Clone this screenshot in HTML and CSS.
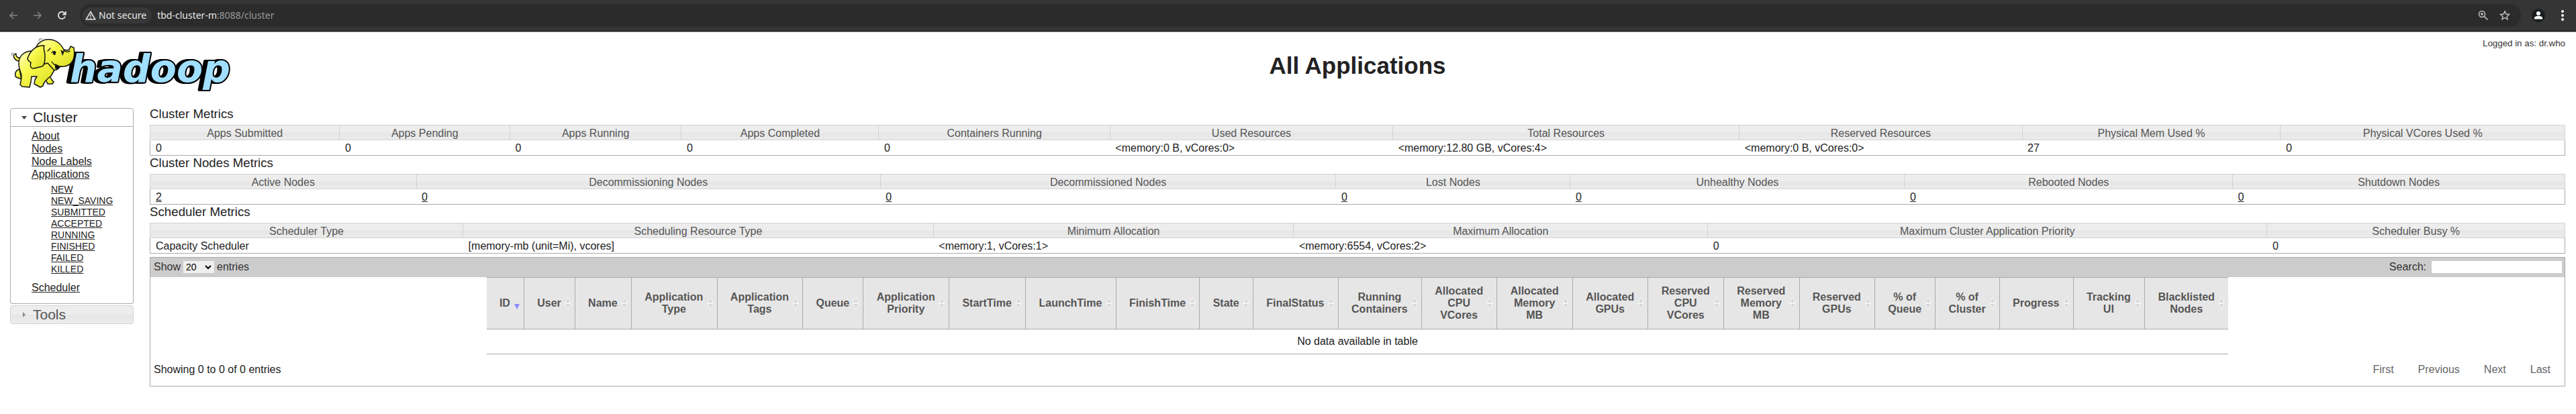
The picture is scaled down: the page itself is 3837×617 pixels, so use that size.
FILE: index.html
```html
<!DOCTYPE html>
<html lang="en">
<head>
<meta charset="utf-8">
<title>All Applications</title>
<link rel="stylesheet" href="styles.css">
</head>
<body>
<svg class="defs" aria-hidden="true">
  <symbol id="sort" viewBox="0 0 10 20">
    <path d="M5 1 9 9.500H1z M5 19 9 10.500H1z" fill="#d9d9d9" stroke="#f6f6f6" stroke-width="1"/>
  </symbol>
  <symbol id="sort-desc" viewBox="0 0 10 20">
    <path d="M1 11H9L5 19z" fill="#8b8bff"/>
  </symbol>
</svg>

<div class="browser">
  <button class="tool dim" aria-label="Back"><svg width="14" height="14" viewBox="0 0 14 14"><path d="M13 7H2M7 2 2 7l5 5"/></svg></button>
  <button class="tool dim" aria-label="Forward"><svg width="14" height="14" viewBox="0 0 14 14"><path d="M1 7h11M7 2l5 5-5 5"/></svg></button>
  <button class="tool reload" aria-label="Reload"><svg width="14" height="14" viewBox="0 0 14 14"><path d="M12 8.500A5.200 5.200 0 1 1 11 3.500L12.500 5M12.800 1v4.500H8.300" stroke-width="1.800"/></svg></button>
  <div class="address">
    <button class="secure"><svg width="16" height="14" viewBox="0 0 16 14"><path d="M8 1.500 14.700 12.800H1.300z" stroke-width="1.500"/><path d="M8 5.500v3.500M8 10v1.500" stroke-width="1.500"/></svg>Not secure</button>
    <span class="url">tbd-cluster-m<span class="url-rest">:8088/cluster</span></span>
    <button class="tool zoomed" aria-label="Zoom"><svg width="16" height="16" viewBox="0 0 16 16"><circle cx="6" cy="6" r="4.500" stroke-width="1.500"/><path d="M9.300 9.300 14.500 14.500M4 6h4M6 4v4" stroke-width="1.500"/></svg></button>
    <button class="tool star" aria-label="Bookmark"><svg width="16" height="16" viewBox="0 0 16 16"><path d="M8 1.800 9.900 6l4.500.400-3.400 3 1 4.500L8 11.500l-4 2.400 1-4.500-3.400-3L6.100 6z" stroke-width="1.400"/></svg></button>
  </div>
  <button class="tool profile" aria-label="Profile"><svg width="20" height="20" viewBox="0 0 20 20"><circle cx="10" cy="10" r="10" class="disc"/><circle cx="10" cy="7" r="3" class="solid"/><path d="M4 15.500v-1.500c0-2 3-3.200 6-3.200s6 1.200 6 3.200v1.500z" class="solid"/></svg></button>
  <button class="tool" aria-label="Menu"><svg width="4" height="16" viewBox="0 0 4 16"><circle cx="2" cy="2" r="2" class="solid"/><circle cx="2" cy="8" r="2" class="solid"/><circle cx="2" cy="14" r="2" class="solid"/></svg></button>
</div>

<header class="header">
  <svg class="logo" width="328" height="84" viewBox="0 0 328 84" role="img" aria-label="hadoop">
    <defs>
      <linearGradient id="skin" x1="0" y1="0" x2="1" y2="1"><stop offset="0" stop-color="#ffffc0"/><stop offset=".4" stop-color="#f8f84a"/><stop offset="1" stop-color="#d8dc20"/></linearGradient>
    </defs>
    <text class="wordmark" x="87" y="65">hadoop</text>
    <g fill="url(#skin)" stroke="#111" stroke-width="1.500" stroke-linejoin="round">
      <path d="M12 34C6 34 2 28 4 24l3-1c-1 4 3 7 7 6z"/>
      <path d="M12 46C6 48 4 54 7 58l8 3z"/>
      <path d="M54 50l6 12 3 3-2 3H54l-4-9z"/>
      <path d="M33 19C20 18 10 26 11 39c0 8 4 12 4 18l-1 8-1 4 3 3 11 1 2-8 1-8h8l-3 5-1 6 9 5 4-2c1-6 6-10 12-15l7-12z"/>
      <path d="M35 18C38 6 48 1 58 2c10 1 17 8 20 15l5 1c4 0 4-4 5-6l5 2c1 6 1 15-2 20-4 7-12 9-20 8 0 4-4 6-8 5l-9-10-14 4z"/>
      <path d="M45 11C34 12 26 22 24 31c2 5 4 4 5 5-2 7 1 9 4 9l13-3c4-3 4-10 4-17-1-8-3-11-1-14z"/>
    </g>
    <g fill="none" stroke="#111" stroke-width="1.300" stroke-linecap="round">
      <path d="M58 15l-4 4M60 22c1-3 5-3 6-1M74 18l2 4M79 17l-3 8M60 35c3 5 9 8 14 7M78 18c3 3 7 3 9 1"/>
      <path d="M41 4l1-3h4M1 26l-1-3 3-1" stroke="#999"/>
    </g>
    <ellipse cx="64" cy="22" rx="2" ry="3" fill="#111"/>
    <ellipse cx="76" cy="21" rx="1.500" ry="2.500" fill="#111"/>
    <path d="M65 38l8 4c-1 4-6 6-8 2z" fill="#111"/>
  </svg>
  <h1>All Applications</h1>
  <div class="user">Logged in as: dr.who</div>
</header>

<div class="page">
  <nav class="nav">
    <h3 class="nav-head open"><button aria-expanded="true"><svg width="8" height="5" viewBox="0 0 8 5"><path d="M0 0h8L4 5z"/></svg>Cluster</button></h3>
    <div class="nav-body">
      <ul class="links">
        <li><a href="#">About</a></li>
        <li><a href="#">Nodes</a></li>
        <li><a href="#">Node Labels</a></li>
        <li><a href="#">Applications</a>
          <ul class="states">
            <li><a href="#">NEW</a></li>
            <li><a href="#">NEW_SAVING</a></li>
            <li><a href="#">SUBMITTED</a></li>
            <li><a href="#">ACCEPTED</a></li>
            <li><a href="#">RUNNING</a></li>
            <li><a href="#">FINISHED</a></li>
            <li><a href="#">FAILED</a></li>
            <li><a href="#">KILLED</a></li>
          </ul>
        </li>
        <li><a href="#">Scheduler</a></li>
      </ul>
    </div>
    <h3 class="nav-head"><button aria-expanded="false"><svg width="8" height="8" viewBox="0 0 8 8"><path d="M2 0v8l4-4z"/></svg>Tools</button></h3>
  </nav>

  <main class="content">
    <h3>Cluster Metrics</h3>
    <table class="metrics">
      <thead><tr><th>Apps Submitted</th><th>Apps Pending</th><th>Apps Running</th><th>Apps Completed</th><th>Containers Running</th><th>Used Resources</th><th>Total Resources</th><th>Reserved Resources</th><th>Physical Mem Used %</th><th>Physical VCores Used %</th></tr></thead>
      <tbody><tr><td>0</td><td>0</td><td>0</td><td>0</td><td>0</td><td>&lt;memory:0 B, vCores:0&gt;</td><td>&lt;memory:12.80 GB, vCores:4&gt;</td><td>&lt;memory:0 B, vCores:0&gt;</td><td>27</td><td>0</td></tr></tbody>
    </table>
    <h3>Cluster Nodes Metrics</h3>
    <table class="metrics">
      <thead><tr><th>Active Nodes</th><th>Decommissioning Nodes</th><th>Decommissioned Nodes</th><th>Lost Nodes</th><th>Unhealthy Nodes</th><th>Rebooted Nodes</th><th>Shutdown Nodes</th></tr></thead>
      <tbody><tr><td><a href="#">2</a></td><td><a href="#">0</a></td><td><a href="#">0</a></td><td><a href="#">0</a></td><td><a href="#">0</a></td><td><a href="#">0</a></td><td><a href="#">0</a></td></tr></tbody>
    </table>
    <h3>Scheduler Metrics</h3>
    <table class="metrics">
      <thead><tr><th>Scheduler Type</th><th>Scheduling Resource Type</th><th>Minimum Allocation</th><th>Maximum Allocation</th><th>Maximum Cluster Application Priority</th><th>Scheduler Busy %</th></tr></thead>
      <tbody><tr><td>Capacity Scheduler</td><td>[memory-mb (unit=Mi), vcores]</td><td>&lt;memory:1, vCores:1&gt;</td><td>&lt;memory:6554, vCores:2&gt;</td><td>0</td><td>0</td></tr></tbody>
    </table>

    <section class="apps">
      <div class="apps-bar">
        <label>Show <span class="select"><select><option>20</option><option>40</option></select><svg width="10" height="7" viewBox="0 0 10 7"><path d="M1 1l4 4 4-4" fill="none" stroke="#000" stroke-width="2"/></svg></span> entries</label>
        <label class="search">Search: <input type="text"></label>
      </div>
      <table class="apps-table">
        <thead><tr>
          <th>ID<svg><use href="#sort-desc"/></svg></th>
          <th>User<svg><use href="#sort"/></svg></th>
          <th>Name<svg><use href="#sort"/></svg></th>
          <th>Application<br>Type<svg><use href="#sort"/></svg></th>
          <th>Application<br>Tags<svg><use href="#sort"/></svg></th>
          <th>Queue<svg><use href="#sort"/></svg></th>
          <th>Application<br>Priority<svg><use href="#sort"/></svg></th>
          <th>StartTime<svg><use href="#sort"/></svg></th>
          <th>LaunchTime<svg><use href="#sort"/></svg></th>
          <th>FinishTime<svg><use href="#sort"/></svg></th>
          <th>State<svg><use href="#sort"/></svg></th>
          <th>FinalStatus<svg><use href="#sort"/></svg></th>
          <th>Running<br>Containers<svg><use href="#sort"/></svg></th>
          <th>Allocated<br>CPU<br>VCores<svg><use href="#sort"/></svg></th>
          <th>Allocated<br>Memory<br>MB<svg><use href="#sort"/></svg></th>
          <th>Allocated<br>GPUs<svg><use href="#sort"/></svg></th>
          <th>Reserved<br>CPU<br>VCores<svg><use href="#sort"/></svg></th>
          <th>Reserved<br>Memory<br>MB<svg><use href="#sort"/></svg></th>
          <th>Reserved<br>GPUs<svg><use href="#sort"/></svg></th>
          <th>% of<br>Queue<svg><use href="#sort"/></svg></th>
          <th>% of<br>Cluster<svg><use href="#sort"/></svg></th>
          <th>Progress<svg><use href="#sort"/></svg></th>
          <th>Tracking<br>UI<svg><use href="#sort"/></svg></th>
          <th>Blacklisted<br>Nodes<svg><use href="#sort"/></svg></th>
        </tr></thead>
        <tbody><tr><td colspan="24">No data available in table</td></tr></tbody>
      </table>
      <div class="apps-foot">
        <span>Showing 0 to 0 of 0 entries</span>
        <div class="pager"><button>First</button><button>Previous</button><button>Next</button><button>Last</button></div>
      </div>
    </section>
  </main>
</div>
</body>
</html>
```
FILE: styles.css
```css
* { box-sizing: border-box; }
body {
  margin: 0;
  background: #fff;
  color: #222;
  font: 16px/18px "Liberation Sans", Arial, sans-serif;
}
button { border: 0; padding: 0; background: none; color: inherit; font: inherit; }
a { color: #222; }
ul { list-style: none; margin: 0; padding: 0; }
h1, h3 { margin: 0; }
h3 { font-weight: normal; }
.defs { display: none; }

/* Browser toolbar */
.browser {
  display: flex;
  align-items: center;
  height: 48px;
  padding: 0 18px 2px 13px;
  background: #353535;
  border-bottom: 1px solid #999;
  box-shadow: inset 0 -1px #111;
  color: #e8e8e8;
  font: 14px/20px "Noto Sans", sans-serif;
}
.tool { display: flex; margin-right: 22px; }
.tool:last-child { margin-right: 0; }
.tool svg, .secure svg { fill: none; stroke: currentColor; stroke-width: 1.5; }
.dim { color: #858585; }
.reload { margin-right: 20px; }
.tool .solid { fill: #fff; stroke: none; }
.tool .disc { fill: #1b1e20; stroke: none; }
.address {
  flex: 1;
  display: flex;
  align-items: center;
  height: 34px;
  margin-right: 16px;
  padding: 0 16px 0 4px;
  border-radius: 17px;
  background: #2b2b2b;
}
.secure {
  display: flex;
  align-items: center;
  gap: 4px;
  height: 24px;
  padding: 0 8px 0 4px;
  border-radius: 12px;
  background: #373737;
}
.url { flex: 1; margin-left: 8px; }
.url-rest { color: #9a9a9a; }
.zoomed { margin-right: 16px; color: #c4c4c4; }
.address .star { margin-right: 0; color: #c4c4c4; }
.profile { margin-right: 24px; }

/* Page header */
.header {
  display: grid;
  grid-template-columns: 206px 1fr;
  height: 111px;
  padding: 9px 16px 0 17px;
}
.logo { grid-area: 1 / 1; overflow: visible; }
.wordmark {
  font: italic bold 57px "DejaVu Sans", sans-serif;
  fill: #a0dfff;
  stroke: #000;
  stroke-width: 4px;
  stroke-linejoin: round;
  paint-order: stroke;
  filter: drop-shadow(-3px 0 0 #000) drop-shadow(-2px 0 0 #000);
}
.header h1 { grid-area: 1 / 2; padding-top: 21px; text-align: center; font-size: 35px; line-height: 40px; }
.user { grid-area: 1 / 2; justify-self: end; font-size: smaller; line-height: 16px; color: #333; }

/* Navigation */
.page { display: flex; gap: 24px; align-items: flex-start; padding: 0 16px 0 15px; }
.nav { flex: none; width: 184px; padding-top: 2px; }
.nav-head {
  border: 1px solid #d3d3d3;
  border-radius: 4px;
  background: linear-gradient(#ededed 50%, #e6e6e6 50%, #ececec);
  color: #555;
  font-size: 21px;
  line-height: 26px;
}
.nav-head.open { border-color: #aaa; border-radius: 4px 4px 0 0; background: #fff; color: #212121; }
.nav-head button { display: flex; align-items: center; gap: 9px; width: 100%; padding-left: 16px; }
.nav-head svg { fill: #888; }
.nav-head.open svg { fill: #444; }
.nav-body {
  margin-bottom: 2px;
  padding: 4px 0 14px 31px;
  border: 1px solid #aaa;
  border-top: 0;
  border-radius: 0 0 4px 4px;
}
.links { line-height: 19px; }
.states { padding: 5px 0 9px 29px; font-size: 14px; line-height: 17px; }

/* Metric tables */
.content { flex: 1; min-width: 0; }
.content h3 { line-height: 21px; padding-bottom: 6px; }
.metrics { width: 100%; border: 1px solid #aaa; border-collapse: collapse; }
.metrics th {
  padding: 3px 8px 0;
  border: 1px solid #d3d3d3;
  background: linear-gradient(#ededed 50%, #e6e6e6 50%, #ececec);
  color: #555;
  font-weight: normal;
}
.metrics td { padding: 3px 8px 1px; }

/* Applications */
.apps { margin-top: 5px; border: 1px solid #aaa; }
.apps-bar {
  display: flex;
  justify-content: space-between;
  padding: 5px 4px 6px 5px;
  background: #ccc;
  color: #333;
}
.apps-bar label { display: flex; align-items: center; gap: 4px; }
.apps-bar .search { gap: 8px; }
.select { position: relative; display: flex; }
.select select {
  width: 46px;
  height: 18px;
  padding: 0 4px;
  border: 0;
  background: #efefef;
  appearance: none;
  color: #000;
  font: 14px/18px "Liberation Sans", Arial, sans-serif;
}
.select svg { position: absolute; right: 4px; top: 6px; }
.search input { width: 194px; height: 18px; padding: 0 2px; border: 0; background: #fff; }
.apps-table { width: 72.15%; margin: 0 auto; border-collapse: separate; border-spacing: 0; }
.apps-table th {
  position: relative;
  padding: 11px 20px 11px 19px;
  border: solid #aaa;
  border-width: 1px 1px 1px 0;
  background: #e6e6e6;
  color: #555;
  white-space: nowrap;
}
.apps-table th:last-child { border-right: 0; }
.apps-table th svg { position: absolute; right: 5px; top: 28px; width: 10px; height: 20px; }
.apps-table td { padding: 9px 10px; border-bottom: 1px solid #aaa; text-align: center; }
.apps-foot { display: flex; justify-content: space-between; padding: 14px 3px 15px 5px; }
.pager { display: flex; color: #666; }
.pager button { padding: 0 18px; }
```
